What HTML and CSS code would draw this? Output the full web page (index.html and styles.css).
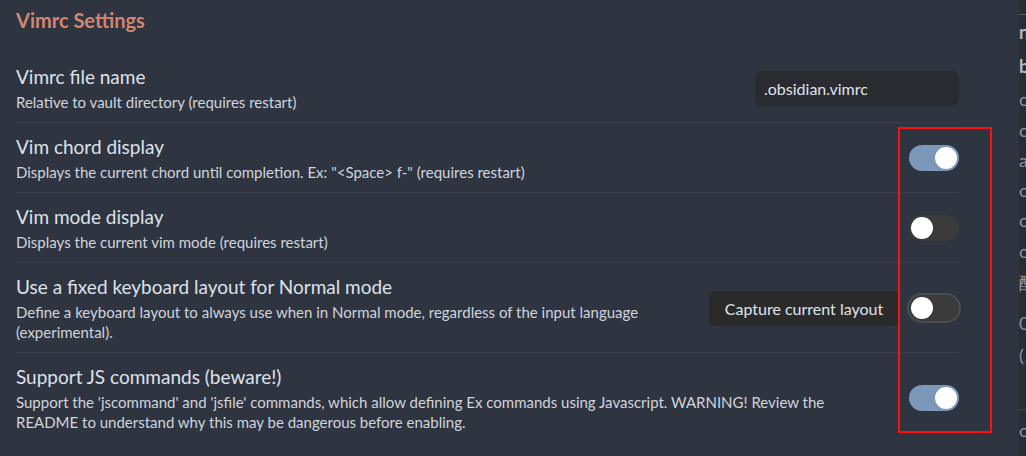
FILE: index.html
```html
<!DOCTYPE html>
<html>
<head>
<meta charset="utf-8">
<link rel="stylesheet" href="styles.css">
</head>
<body>
<div class="page">
  <main class="main">
    <h2 class="heading">Vimrc Settings</h2>
    <div class="item">
      <div class="info">
        <div class="name">Vimrc file name</div>
        <div class="desc">Relative to vault directory (requires restart)</div>
      </div>
      <div class="control">
        <div class="input">.obsidian.vimrc</div>
      </div>
    </div>
    <div class="item">
      <div class="info">
        <div class="name">Vim chord display</div>
        <div class="desc">Displays the current chord until completion. Ex: "&lt;Space&gt; f-" (requires restart)</div>
      </div>
      <div class="control"><div class="toggle on"><span class="knob"></span></div></div>
    </div>
    <div class="item">
      <div class="info">
        <div class="name">Vim mode display</div>
        <div class="desc">Displays the current vim mode (requires restart)</div>
      </div>
      <div class="control"><div class="toggle"><span class="knob"></span></div></div>
    </div>
    <div class="item">
      <div class="info">
        <div class="name">Use a fixed keyboard layout for Normal mode</div>
        <div class="desc">Define a keyboard layout to always use when in Normal mode, regardless of the input language<br>(experimental).</div>
      </div>
      <div class="control">
        <div class="button">Capture current layout</div>
        <div class="toggle focus"><span class="knob"></span></div>
      </div>
    </div>
    <div class="item">
      <div class="info">
        <div class="name">Support JS commands (beware!)</div>
        <div class="desc">Support the 'jscommand' and 'jsfile' commands, which allow defining Ex commands using Javascript. WARNING! Review the<br>README to understand why this may be dangerous before enabling.</div>
      </div>
      <div class="control"><div class="toggle on"><span class="knob"></span></div></div>
    </div>
  </main>
  <aside class="strip">
    <div class="strip-line"></div>
    <div class="sl b h34">n</div>
    <div class="sl b h34">b</div>
    <div class="sl h32">c</div>
    <div class="sl h30">c</div>
    <div class="sl h30">a</div>
    <div class="sl h30">o</div>
    <div class="sl h30">o</div>
    <div class="sl h32">o</div>
    <div class="sl h30">酮</div>
    <div class="sl h52">0-</div>
    <div class="sl h12">(</div>
    <div class="strip-box"></div>
    <div class="sl h40">o</div>
  </aside>
  <div class="annot"></div>
</div>
</body>
</html>
```

FILE: styles.css
```css
* { box-sizing: border-box; }
html, body { margin: 0; padding: 0; }
body {
  background: #2e3440;
  font-family: Lato, "Noto Sans", sans-serif;
  color: #d8dee9;
  width: 1026px;
  height: 456px;
  overflow: hidden;
}
.page {
  display: flex;
  height: 456px;
  position: relative;
}
.main {
  width: 1019px;
  flex: none;
  padding: 0 60px 0 16px;
}
.heading {
  margin: 0;
  height: 53px;
  padding-top: 8px;
  font-size: 20px;
  line-height: 24px;
  font-weight: 700;
  color: #d08770;
}
.item {
  display: flex;
  align-items: center;
  padding: 11px 0 10px;
  border-top: 1px solid #3a3f4a;
}
.heading + .item { border-top: none; }
.info {
  flex: 1 1 auto;
  margin-right: 16px;
}
.name {
  font-size: 19px;
  line-height: 26px;
  color: #dde2ea;
}
.desc {
  margin-top: 2px;
  font-size: 15px;
  line-height: 20px;
  color: #d0d5dd;
}
.control {
  display: flex;
  align-items: center;
  gap: 10px;
  flex: none;
}
.input {
  width: 204px;
  height: 35px;
  border-radius: 6px;
  background: #292b30;
  padding: 0 9px;
  line-height: 35px;
  font-size: 16px;
  color: #dfe4ec;
}
.button {
  width: 190px;
  height: 35px;
  border-radius: 6px;
  background: #2a2a2b;
  line-height: 35px;
  text-align: center;
  font-size: 16px;
  color: #dfe4ec;
}
.toggle {
  width: 50px;
  height: 26px;
  border-radius: 13px;
  background: #3b3b3c;
  position: relative;
}
.toggle.on { background: #7b98b8; }
.toggle.focus { box-shadow: 0 0 0 2px #4b4d50; }
.knob {
  position: absolute;
  top: 2px;
  left: 2px;
  width: 22px;
  height: 22px;
  border-radius: 50%;
  background: #ffffff;
}
.toggle.on .knob { left: 26px; }
.strip {
  flex: 1;
  background: #282c34;
  overflow: hidden;
  padding-top: 14px;
  color: #8e949d;
  font-size: 18px;
}
.strip-line { height: 1px; background: #555a63; }
.sl { white-space: nowrap; }
.sl.b { font-weight: 700; color: #b5bac3; }
.h12 { height: 12px; line-height: 12px; }
.h30 { height: 30px; line-height: 30px; }
.h32 { height: 32px; line-height: 32px; }
.h34 { height: 34px; line-height: 34px; }
.h40 { height: 40px; line-height: 40px; }
.h52 { height: 52px; line-height: 52px; }
.strip-box { height: 49px; border-top: 1px solid #3d424c; border-bottom: 1px solid #3d424c; }
.annot {
  position: absolute;
  left: 898px;
  top: 127px;
  width: 94px;
  height: 306px;
  border: 2px solid #ff1010;
}
```
